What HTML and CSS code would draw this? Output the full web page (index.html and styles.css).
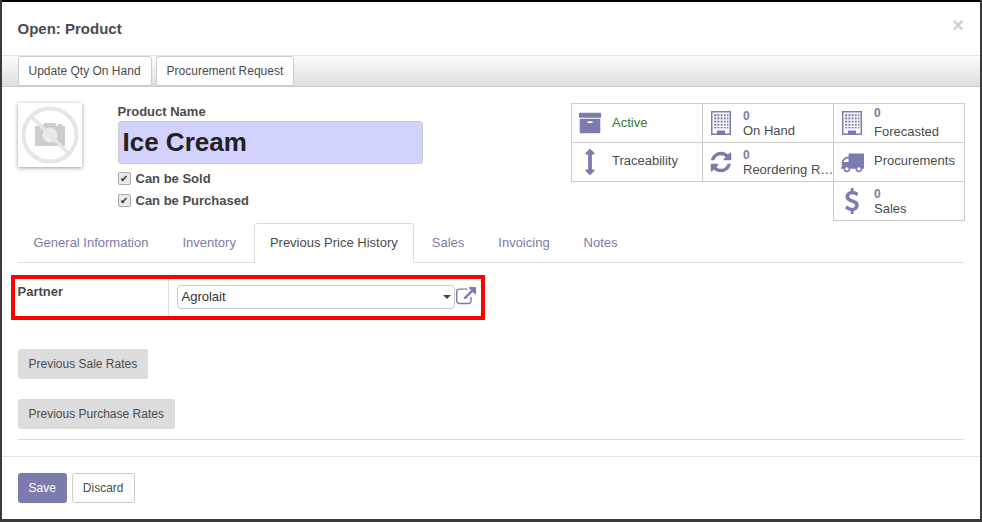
FILE: index.html
```html
<!DOCTYPE html>
<html lang="en">
<head>
    <meta charset="UTF-8">
    <meta name="viewport" content="width=device-width, initial-scale=1.0">
    <title>Open: Product</title>
    <link rel="stylesheet" href="styles.css">
</head>
<body>
    <svg class="defs" width="0" height="0">
        <defs>
            <pattern id="windows" width="3.2" height="3.2" patternUnits="userSpaceOnUse">
                <rect width="2" height="2" fill="#7c7bad"/>
            </pattern>
            <symbol id="building" viewBox="0 0 20 24">
                <path fill="#7c7bad" d="M0 0h20v24H0z"/>
                <path fill="#fff" d="M1.5 1.5h17v21h-4.500v-3h-8v3h-4.500z"/>
                <rect x="3" y="3" width="14.500" height="14.500" fill="url(#windows)"/>
            </symbol>
        </defs>
    </svg>

    <div class="modal">
        <div class="modal-header">
            <h4>Open: Product</h4>
            <span class="close">×</span>
        </div>

        <!-- Action bar -->
        <div class="action-bar">
            <button class="bar-btn">Update Qty On Hand</button>
            <button class="bar-btn">Procurement Request</button>
        </div>

        <div class="sheet">
            <div class="top-row">
                <div class="product-image">
                    <svg width="58" height="58" viewBox="0 0 58 58">
                        <path fill="#cdcdcd" d="M14 20h7l2-3h11l2 3h1v-2h4v2h3v20H14z"/>
                        <circle cx="29" cy="29" r="7.500" fill="#ebebeb"/>
                        <circle cx="29" cy="29" r="26.500" fill="none" stroke="#e6e6e6" stroke-width="4"/>
                        <path d="M10 10l38 38" stroke="#e6e6e6" stroke-width="3.500"/>
                    </svg>
                </div>
                <div class="title-block">
                    <label class="name-label">Product Name</label>
                    <div class="name-input">Ice Cream</div>
                    <div class="check-row"><span class="check">✔</span>Can be Sold</div>
                    <div class="check-row"><span class="check">✔</span>Can be Purchased</div>
                </div>

                <!-- Smart buttons -->
                <div class="stats">
                    <div class="stat">
                        <span class="stat-icon"><svg width="24" height="24" viewBox="0 0 1792 1792"><path d="M1088 832q0-26-19-45t-45-19h-256q-26 0-45 19t-19 45 19 45 45 19h256q26 0 45-19t19-45zm576-192v960q0 26-19 45t-45 19h-1408q-26 0-45-19t-19-45v-960q0-26 19-45t45-19h1408q26 0 45 19t19 45zm64-448v256q0 26-19 45t-45 19h-1536q-26 0-45-19t-19-45v-256q0-26 19-45t45-19h1536q26 0 45 19t19 45z"/></svg></span>
                        <span class="stat-text plain active-text">Active</span>
                    </div>
                    <div class="stat">
                        <span class="stat-icon"><svg width="20" height="24"><use href="#building"/></svg></span>
                        <div class="stat-text"><b>0</b><span>On Hand</span></div>
                    </div>
                    <div class="stat">
                        <span class="stat-icon"><svg width="20" height="24"><use href="#building"/></svg></span>
                        <div class="stat-text wide"><b>0</b><span>Forecasted</span></div>
                    </div>
                    <div class="stat">
                        <span class="stat-icon"><svg width="26" height="26" viewBox="-192 0 1792 1792"><path d="M1024 320q0 26-19 45t-45 19h-128v1024h128q26 0 45 19t19 45-19 45l-256 256q-19 19-45 19t-45-19l-256-256q-19-19-19-45t19-45 45-19h128v-1024h-128q-26 0-45-19t-19-45 19-45l256-256q19-19 45-19t45 19l256 256q19 19 19 45z"/></svg></span>
                        <span class="stat-text plain raised">Traceability</span>
                    </div>
                    <div class="stat">
                        <span class="stat-icon"><svg width="24" height="24" viewBox="0 0 1792 1792"><path d="M1639 1056q0 5-1 7-64 268-268 434.500t-478 166.500q-146 0-282.500-55t-243.500-157l-129 129q-19 19-45 19t-45-19-19-45v-448q0-26 19-45t45-19h448q26 0 45 19t19 45-19 45l-137 137q71 66 161 102t187 36q134 0 250-65t186-179q11-17 53-117 8-23 30-23h192q13 0 22.500 9.500t9.500 22.500zm25-800v448q0 26-19 45t-45 19h-448q-26 0-45-19t-19-45 19-45l138-138q-148-137-349-137-134 0-250 65t-186 179q-11 17-53 117-8 23-30 23h-199q-13 0-22.500-9.500t-9.500-22.500v-7q65-268 270-434.500t480-166.500q146 0 284 55.500t245 156.500l130-129q19-19 45-19t45 19 19 45z"/></svg></span>
                        <div class="stat-text"><b>0</b><span>Reordering Rules</span></div>
                    </div>
                    <div class="stat">
                        <span class="stat-icon"><svg width="24" height="24" viewBox="0 0 1792 1792"><path d="M640 1408q0-52-38-90t-90-38-90 38-38 90 38 90 90 38 90-38 38-90zm-384-512h384v-256h-158q-13 0-22 9l-195 195q-9 9-9 22v30zm1280 512q0-52-38-90t-90-38-90 38-38 90 38 90 90 38 90-38 38-90zm256-1088v1024q0 15-4 26.500t-13.500 18.500-16.500 11.500-23.500 6-22.500 2-25.500 0-22.500-.5q0 106-75 181t-181 75-181-75-75-181h-384q0 106-75 181t-181 75-181-75-75-181h-64q-3 0-22.500.5t-25.500 0-22.500-2-23.500-6-16.500-11.500-13.500-18.500-4-26.500q0-26 19-45t45-19v-320q0-8-.5-35t0-38 2.500-34.500 6.500-37 14-30.500 22.500-30l198-198q19-19 50.500-32t58.500-13h160v-192q0-26 19-45t45-19h1024q26 0 45 19t19 45z"/></svg></span>
                        <span class="stat-text plain raised">Procurements</span>
                    </div>
                    <div class="stat last-stat">
                        <span class="stat-icon"><svg width="26" height="26" viewBox="0 0 1792 1792"><path d="M1362 1185q0 153-99.500 263.500t-258.500 136.500v175q0 14-9 23t-23 9h-135q-13 0-22.500-9.500t-9.500-22.500v-175q-66-9-127.500-31t-101.500-44.500-74-48-46.500-37.500-17.500-18q-17-21-2-41l103-135q7-10 23-12 15-2 24 9l2 2q113 99 243 125 37 8 74 8 81 0 142.500-43t61.500-122q0-28-15-53t-33.500-42-58.500-37.500-66-32-80-32.500q-39-16-61.500-25t-61.500-26.500-62.500-31-56.500-35.500-53.500-42.500-43.500-49-35.500-58-21-66.500-8.500-78q0-138 98-242t255-134v-180q0-13 9.500-22.500t22.500-9.500h135q14 0 23 9t9 23v176q57 6 110.500 23t87 33.500 63.500 37.500 39 29 15 14q17 18 5 38l-81 146q-8 15-23 16-14 3-27-7-3-3-14.500-12t-39-26.500-58.500-32-74.500-26-85.500-11.500q-95 0-155 43t-60 111q0 26 8.500 48t29.500 41.500 39.500 33 56 31 60.500 27 70 27.500q53 20 81 31.500t76 35 75.500 42.500 62 50 53 63.500 31.500 76.500 13 94z"/></svg></span>
                        <div class="stat-text"><b>0</b><span>Sales</span></div>
                    </div>
                </div>
            </div>

            <!-- Tabs -->
            <ul class="tabs">
                <li>General Information</li>
                <li>Inventory</li>
                <li class="active">Previous Price History</li>
                <li>Sales</li>
                <li>Invoicing</li>
                <li>Notes</li>
            </ul>

            <div class="partner-row">
                <div class="partner-label">Partner</div>
                <div class="partner-field">
                    <div class="select">Agrolait<span class="caret"></span></div>
                    <svg class="ext-link" width="20" height="20" viewBox="0 0 1792 1792"><path d="M1408 928v320q0 119-84.500 203.500t-203.500 84.500h-832q-119 0-203.500-84.500t-84.500-203.500v-832q0-119 84.500-203.500t203.500-84.500h704q14 0 23 9t9 23v64q0 14-9 23t-23 9h-704q-66 0-113 47t-47 113v832q0 66 47 113t113 47h832q66 0 113-47t47-113v-320q0-14 9-23t23-9h64q14 0 23 9t9 23zm384-864v512q0 26-19 45t-45 19-45-19l-176-176-652 652q-10 10-23 10t-23-10l-114-114q-10-10-10-23t10-23l652-652-176-176q-19-19-19-45t19-45 45-19h512q26 0 45 19t19 45z"/></svg>
                </div>
            </div>

            <button class="rate-btn first-rate">Previous Sale Rates</button>
            <button class="rate-btn">Previous Purchase Rates</button>
            <hr class="sheet-end">
        </div>

        <div class="modal-footer">
            <button class="btn-save">Save</button>
            <button class="btn-discard">Discard</button>
        </div>
    </div>
</body>
</html>
```

FILE: styles.css
```css
* {
    box-sizing: border-box;
}
html, body {
    height: 100%;
}
body {
    margin: 0;
    padding: 2px 2px 3px 1.5px;
    background-color: #3a3a3a;
    font-family: "Liberation Sans", Arial, sans-serif;
    font-size: 13px;
    color: #4c4c4c;
    overflow: hidden;
}
button {
    font-family: inherit;
    font-size: 12px;
    cursor: pointer;
}
.defs {
    position: absolute;
}
.modal {
    display: flex;
    flex-direction: column;
    height: 100%;
    background-color: white;
    box-shadow: 0 -2px 0 #000;
}

/* Header */
.modal-header {
    display: flex;
    justify-content: space-between;
    align-items: flex-start;
    height: 54px;
    padding: 0 16px;
    border-bottom: 1px solid #e5e5e5;
}
.modal-header h4 {
    margin: 18px 0 0;
    font-size: 15px;
    line-height: 17px;
    font-weight: bold;
}
.close {
    margin: 12px 0 0;
    font-size: 20px;
    line-height: 22px;
    font-weight: bold;
    color: #cfcfcf;
}

/* Action bar */
.action-bar {
    display: flex;
    gap: 4px;
    height: 31px;
    padding: 0 16px;
    background: linear-gradient(#fcfcfc, #dedede);
    border-bottom: 1px solid #ccc;
}
.bar-btn {
    height: 30px;
    padding: 0 10px;
    background-color: white;
    color: #4c4c4c;
    border: 1px solid #ccc;
    border-radius: 3px;
}

/* Sheet */
.sheet {
    flex: 1;
    padding: 16px 16px 0;
}
.top-row {
    display: flex;
}
.product-image {
    display: flex;
    align-items: center;
    justify-content: center;
    width: 64px;
    height: 64px;
    background-color: white;
    box-shadow: 0 1px 4px rgba(0, 0, 0, 0.4);
}
.title-block {
    width: 305px;
    margin-left: 36px;
}
.name-label {
    display: block;
    height: 18px;
    padding-top: 1px;
    font-weight: bold;
    line-height: 15px;
}
.name-input {
    height: 43px;
    padding-left: 4px;
    background-color: #d2d2ff;
    border: 1px solid #ccc;
    border-radius: 3px;
    color: #212121;
    font-size: 26px;
    font-weight: bold;
    line-height: 40px;
}
.check-row {
    display: flex;
    align-items: center;
    height: 22px;
    font-weight: bold;
}
.name-input + .check-row {
    margin-top: 3px;
}
.check {
    width: 13px;
    height: 13px;
    margin-right: 5px;
    background-color: #e9e9e9;
    border: 1px solid #aaa;
    border-radius: 2px;
    color: #333;
    font-size: 10px;
    font-weight: normal;
    line-height: 11px;
    text-align: center;
}
.stats {
    display: grid;
    grid-template-columns: repeat(3, 131px);
    grid-auto-rows: 39px;
    align-self: flex-start;
    margin-left: auto;
}
.stat {
    display: flex;
    align-items: center;
    min-width: 0;
    margin: 0 -1px -1px 0;
    border: 1px solid #ccc;
}
.last-stat {
    grid-column: 3;
}
.stat-icon {
    display: flex;
    flex: none;
    align-items: center;
    justify-content: center;
    width: 40px;
    padding-right: 4px;
}
.stat-icon svg {
    fill: #7c7bad;
}
.stat-text {
    min-width: 0;
    margin-right: -2px;
    line-height: 15px;
}
.stat-text b {
    display: block;
    font-size: 12px;
    line-height: 14px;
    color: #7c7bad;
}
.stat-text span {
    display: block;
    overflow: hidden;
    white-space: nowrap;
    text-overflow: ellipsis;
}
.stat-text.wide {
    padding-bottom: 1px;
}
.stat-text.wide b {
    margin-bottom: 4px;
}
.stat-text.plain {
    padding-bottom: 2px;
}
.stat-text.raised {
    padding-bottom: 4px;
}
.active-text {
    color: #2f7d3b;
}

/* Tabs */
.tabs {
    display: flex;
    margin: 3px 0 0;
    padding: 0;
    list-style: none;
    border-bottom: 1px solid #ddd;
}
.tabs li {
    height: 40px;
    margin: 0 2px -1px 0;
    padding: 0 15px;
    border: 1px solid transparent;
    border-radius: 3px 3px 0 0;
    color: #7c7bad;
    line-height: 37px;
}
.tabs li.active {
    background-color: white;
    border-color: #ddd #ddd white;
    color: #4c4c4c;
}

/* Partner field, boxed in red */
.partner-row {
    display: flex;
    width: 474px;
    height: 45px;
    margin: 12px 0 0 -7px;
    border: 4px solid #f00;
}
.partner-label {
    width: 154px;
    padding: 5px 0 0 3px;
    border-right: 1px solid #ddd;
    font-weight: bold;
    line-height: 15px;
}
.partner-field {
    display: flex;
    align-items: flex-start;
    padding: 6px 0 0 8px;
}
.select {
    position: relative;
    width: 278px;
    height: 24px;
    padding-left: 4px;
    border: 1px solid #ccc;
    border-radius: 4px;
    color: #333;
    line-height: 21px;
}
.caret {
    position: absolute;
    top: 9px;
    right: 3px;
    border: 4px solid transparent;
    border-top-color: #444;
    border-bottom: 0;
}
.ext-link {
    margin: 2px 0 0 1px;
    fill: #7c7bad;
}

/* Rate buttons */
.rate-btn {
    display: block;
    height: 30px;
    padding: 0 11px;
    background-color: #ddd;
    color: #4c4c4c;
    border: none;
    border-radius: 3px;
    margin-top: 20px;
}
.first-rate {
    margin-top: 29px;
}
.sheet-end {
    margin: 10px 0 0;
    border: none;
    border-top: 1px solid #ddd;
}

/* Footer */
.modal-footer {
    display: flex;
    gap: 5px;
    padding: 16px;
    border-top: 1px solid #e5e5e5;
}
.btn-save {
    height: 30px;
    padding: 0 11px;
    background-color: #7c7bad;
    color: white;
    border: none;
    border-radius: 3px;
}
.btn-discard {
    height: 30px;
    padding: 0 10px;
    background-color: white;
    color: #4c4c4c;
    border: 1px solid #ccc;
    border-radius: 3px;
}
```
